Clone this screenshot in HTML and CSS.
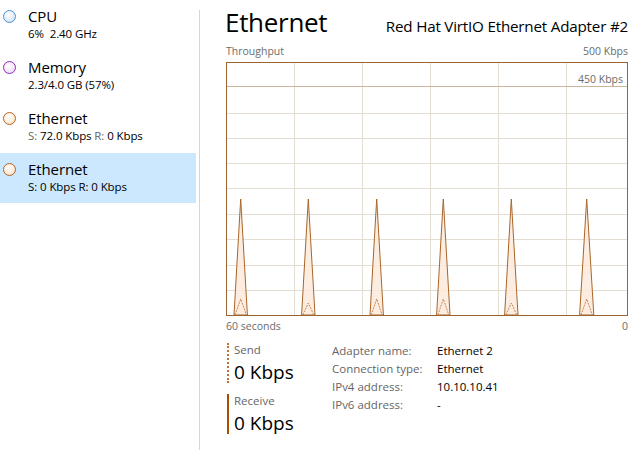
FILE: index.html
```html
<!DOCTYPE html>
<html>
<head>
<meta charset="utf-8">
<link rel="stylesheet" href="styles.css">
</head>
<body>
<div class="app">
  <aside class="sidebar">
    <div class="item">
      <span class="dot dot-cpu"></span>
      <div class="item-text">
        <div class="item-title">CPU</div>
        <div class="item-sub">6%&nbsp; 2.40 GHz</div>
      </div>
    </div>
    <div class="item">
      <span class="dot dot-mem"></span>
      <div class="item-text">
        <div class="item-title">Memory</div>
        <div class="item-sub">2.3/4.0 GB (57%)</div>
      </div>
    </div>
    <div class="item">
      <span class="dot dot-eth"></span>
      <div class="item-text">
        <div class="item-title">Ethernet</div>
        <div class="item-sub"><span class="muted">S:</span> 72.0 Kbps <span class="muted">R:</span> 0 Kbps</div>
      </div>
    </div>
    <div class="item selected">
      <span class="dot dot-eth"></span>
      <div class="item-text">
        <div class="item-title">Ethernet</div>
        <div class="item-sub">S: 0 Kbps R: 0 Kbps</div>
      </div>
    </div>
  </aside>
  <div class="divider"></div>
  <main class="main">
    <header class="header">
      <h1 class="title">Ethernet</h1>
      <div class="adapter">Red Hat VirtIO Ethernet Adapter #2</div>
    </header>
    <div class="axis-row top">
      <span>Throughput</span>
      <span>500 Kbps</span>
    </div>
    <div class="graph">
      <svg width="402" height="254" viewBox="0 0 402 254">
        <g stroke="#e4ddd2" stroke-width="1">
          <line x1="1" y1="51.5" x2="401" y2="51.5"/>
          <line x1="1" y1="76.5" x2="401" y2="76.5"/>
          <line x1="1" y1="101.5" x2="401" y2="101.5"/>
          <line x1="1" y1="126.5" x2="401" y2="126.5"/>
          <line x1="1" y1="152.5" x2="401" y2="152.5"/>
          <line x1="1" y1="177.5" x2="401" y2="177.5"/>
          <line x1="1" y1="203.5" x2="401" y2="203.5"/>
          <line x1="1" y1="228.5" x2="401" y2="228.5"/>
          <line x1="68.5" y1="1" x2="68.5" y2="253"/>
          <line x1="136.5" y1="1" x2="136.5" y2="253"/>
          <line x1="204.5" y1="1" x2="204.5" y2="253"/>
          <line x1="272.5" y1="1" x2="272.5" y2="253"/>
          <line x1="340.5" y1="1" x2="340.5" y2="253"/>
        </g>
        <line x1="1" y1="24.5" x2="401" y2="24.5" stroke="#c9b59c" stroke-width="1"/>
        <g fill="#fbeadb" fill-opacity="0.85" stroke="#a8662a" stroke-width="1">
          <polygon points="8,253 14.7,137 21.4,253"/>
          <polygon points="75.6,253 82.3,137 89,253"/>
          <polygon points="144,253 150.7,137 157.4,253"/>
          <polygon points="210.6,253 217.3,137 224,253"/>
          <polygon points="278.6,253 285.3,137 292,253"/>
          <polygon points="353.6,253 360.7,137 367.8,253"/>
        </g>
        <g fill="none" stroke="#c8875a" stroke-width="1" stroke-dasharray="2 1">
          <polyline points="9,253 14.7,237 20.4,253"/>
          <polyline points="76.8,253 82.3,241 87.8,253"/>
          <polyline points="145.2,253 150.7,237 156.2,253"/>
          <polyline points="211.8,253 217.3,237 222.8,253"/>
          <polyline points="279.8,253 285.3,241 290.8,253"/>
          <polyline points="355,253 360.7,237 366.4,253"/>
        </g>
        <rect x="0.5" y="0.5" width="401" height="253" fill="none" stroke="#9a6330" stroke-width="1"/>
      </svg>
      <span class="max-label">450 Kbps</span>
    </div>
    <div class="axis-row bottom">
      <span>60 seconds</span>
      <span>0</span>
    </div>
    <section class="stats">
      <div class="rates">
        <div class="rate send">
          <div class="rate-label">Send</div>
          <div class="rate-value">0 Kbps</div>
        </div>
        <div class="rate receive">
          <div class="rate-label">Receive</div>
          <div class="rate-value">0 Kbps</div>
        </div>
      </div>
      <dl class="details">
        <dt>Adapter name:</dt><dd>Ethernet 2</dd>
        <dt>Connection type:</dt><dd>Ethernet</dd>
        <dt>IPv4 address:</dt><dd>10.10.10.41</dd>
        <dt>IPv6 address:</dt><dd>-</dd>
      </dl>
    </section>
  </main>
</div>
</body>
</html>
```
FILE: styles.css
```css
html, body {
  margin: 0;
  padding: 0;
  background: #ffffff;
}
body {
  font-family: "Open Sans", "Noto Sans", "Liberation Sans", sans-serif;
  color: #000;
  width: 642px;
  height: 471px;
  overflow: hidden;
}
.app {
  display: flex;
  height: 471px;
}
.sidebar {
  width: 196px;
  flex: none;
  display: flex;
  flex-direction: column;
}
.item {
  height: 51px;
  box-sizing: border-box;
  display: flex;
  align-items: flex-start;
  padding: 6px 0 0 3px;
}
.item.selected {
  background: #cce8ff;
  height: 50px;
}
.dot {
  width: 11px;
  height: 11px;
  border-radius: 50%;
  border: 1px solid;
  flex: none;
  margin-top: 4px;
  margin-right: 12px;
}
.dot-cpu {
  border-color: #4d93cf;
  background: radial-gradient(circle at 40% 35%, #ffffff 0%, #e6eff7 45%, #c9dceb 100%);
}
.dot-mem {
  border-color: #9028b4;
  background: radial-gradient(circle at 40% 35%, #ffffff 0%, #f5eafa 50%, #e8d3f0 100%);
}
.dot-eth {
  border-color: #b0672a;
  background: radial-gradient(circle at 40% 35%, #ffffff 0%, #fdf0e3 45%, #f6d6b7 100%);
}
.item-title {
  font-size: 15px;
  line-height: 20px;
  letter-spacing: -0.1px;
}
.item-sub {
  font-size: 11.5px;
  line-height: 15px;
  letter-spacing: -0.1px;
}
.muted {
  color: #666;
}
.divider {
  width: 1px;
  flex: none;
  margin: 10px 0 21px 3px;
  background: #d6d6d6;
}
.main {
  flex: 1;
  padding: 0 14px 0 26px;
  display: flex;
  flex-direction: column;
}
.header {
  display: flex;
  justify-content: space-between;
  align-items: baseline;
  height: 44px;
}
.title {
  margin: 0;
  font-weight: 400;
  font-size: 26px;
  line-height: 44px;
  letter-spacing: -0.3px;
  margin-left: -1px;
}
.adapter {
  font-size: 15.2px;
  letter-spacing: -0.2px;
}
.axis-row {
  display: flex;
  justify-content: space-between;
  font-size: 10.5px;
  color: #6b6b6b;
  line-height: 14px;
}
.axis-row.top {
  height: 18px;
  align-items: flex-start;
}
.axis-row.bottom {
  height: 18px;
  align-items: center;
  padding-top: 2px;
  box-sizing: border-box;
}
.graph {
  position: relative;
  width: 402px;
  height: 254px;
}
.graph svg {
  display: block;
}
.max-label {
  position: absolute;
  right: 5px;
  top: 10px;
  font-size: 10.5px;
  color: #6b6b6b;
}
.stats {
  display: flex;
  margin-top: 9px;
}
.rates {
  width: 106px;
  flex: none;
}
.rate {
  padding-left: 5px;
  margin-left: 1px;
  border-left: 2px solid #a74f01;
  height: 40px;
  box-sizing: border-box;
}
.rate.send {
  border-left: 2px dotted #c0703a;
}
.rate.receive {
  margin-top: 11px;
}
.rate-label {
  font-size: 11.5px;
  color: #666;
  line-height: 14px;
}
.rate-value {
  font-size: 19px;
  line-height: 30px;
}
.details {
  margin: -2px 0 0 0;
  display: grid;
  grid-template-columns: 105px auto;
  grid-auto-rows: 18px;
  font-size: 11.5px;
  align-content: start;
  align-items: center;
}
.details dt {
  color: #666;
}
.details dd {
  margin: 0;
  color: #000;
}
```
